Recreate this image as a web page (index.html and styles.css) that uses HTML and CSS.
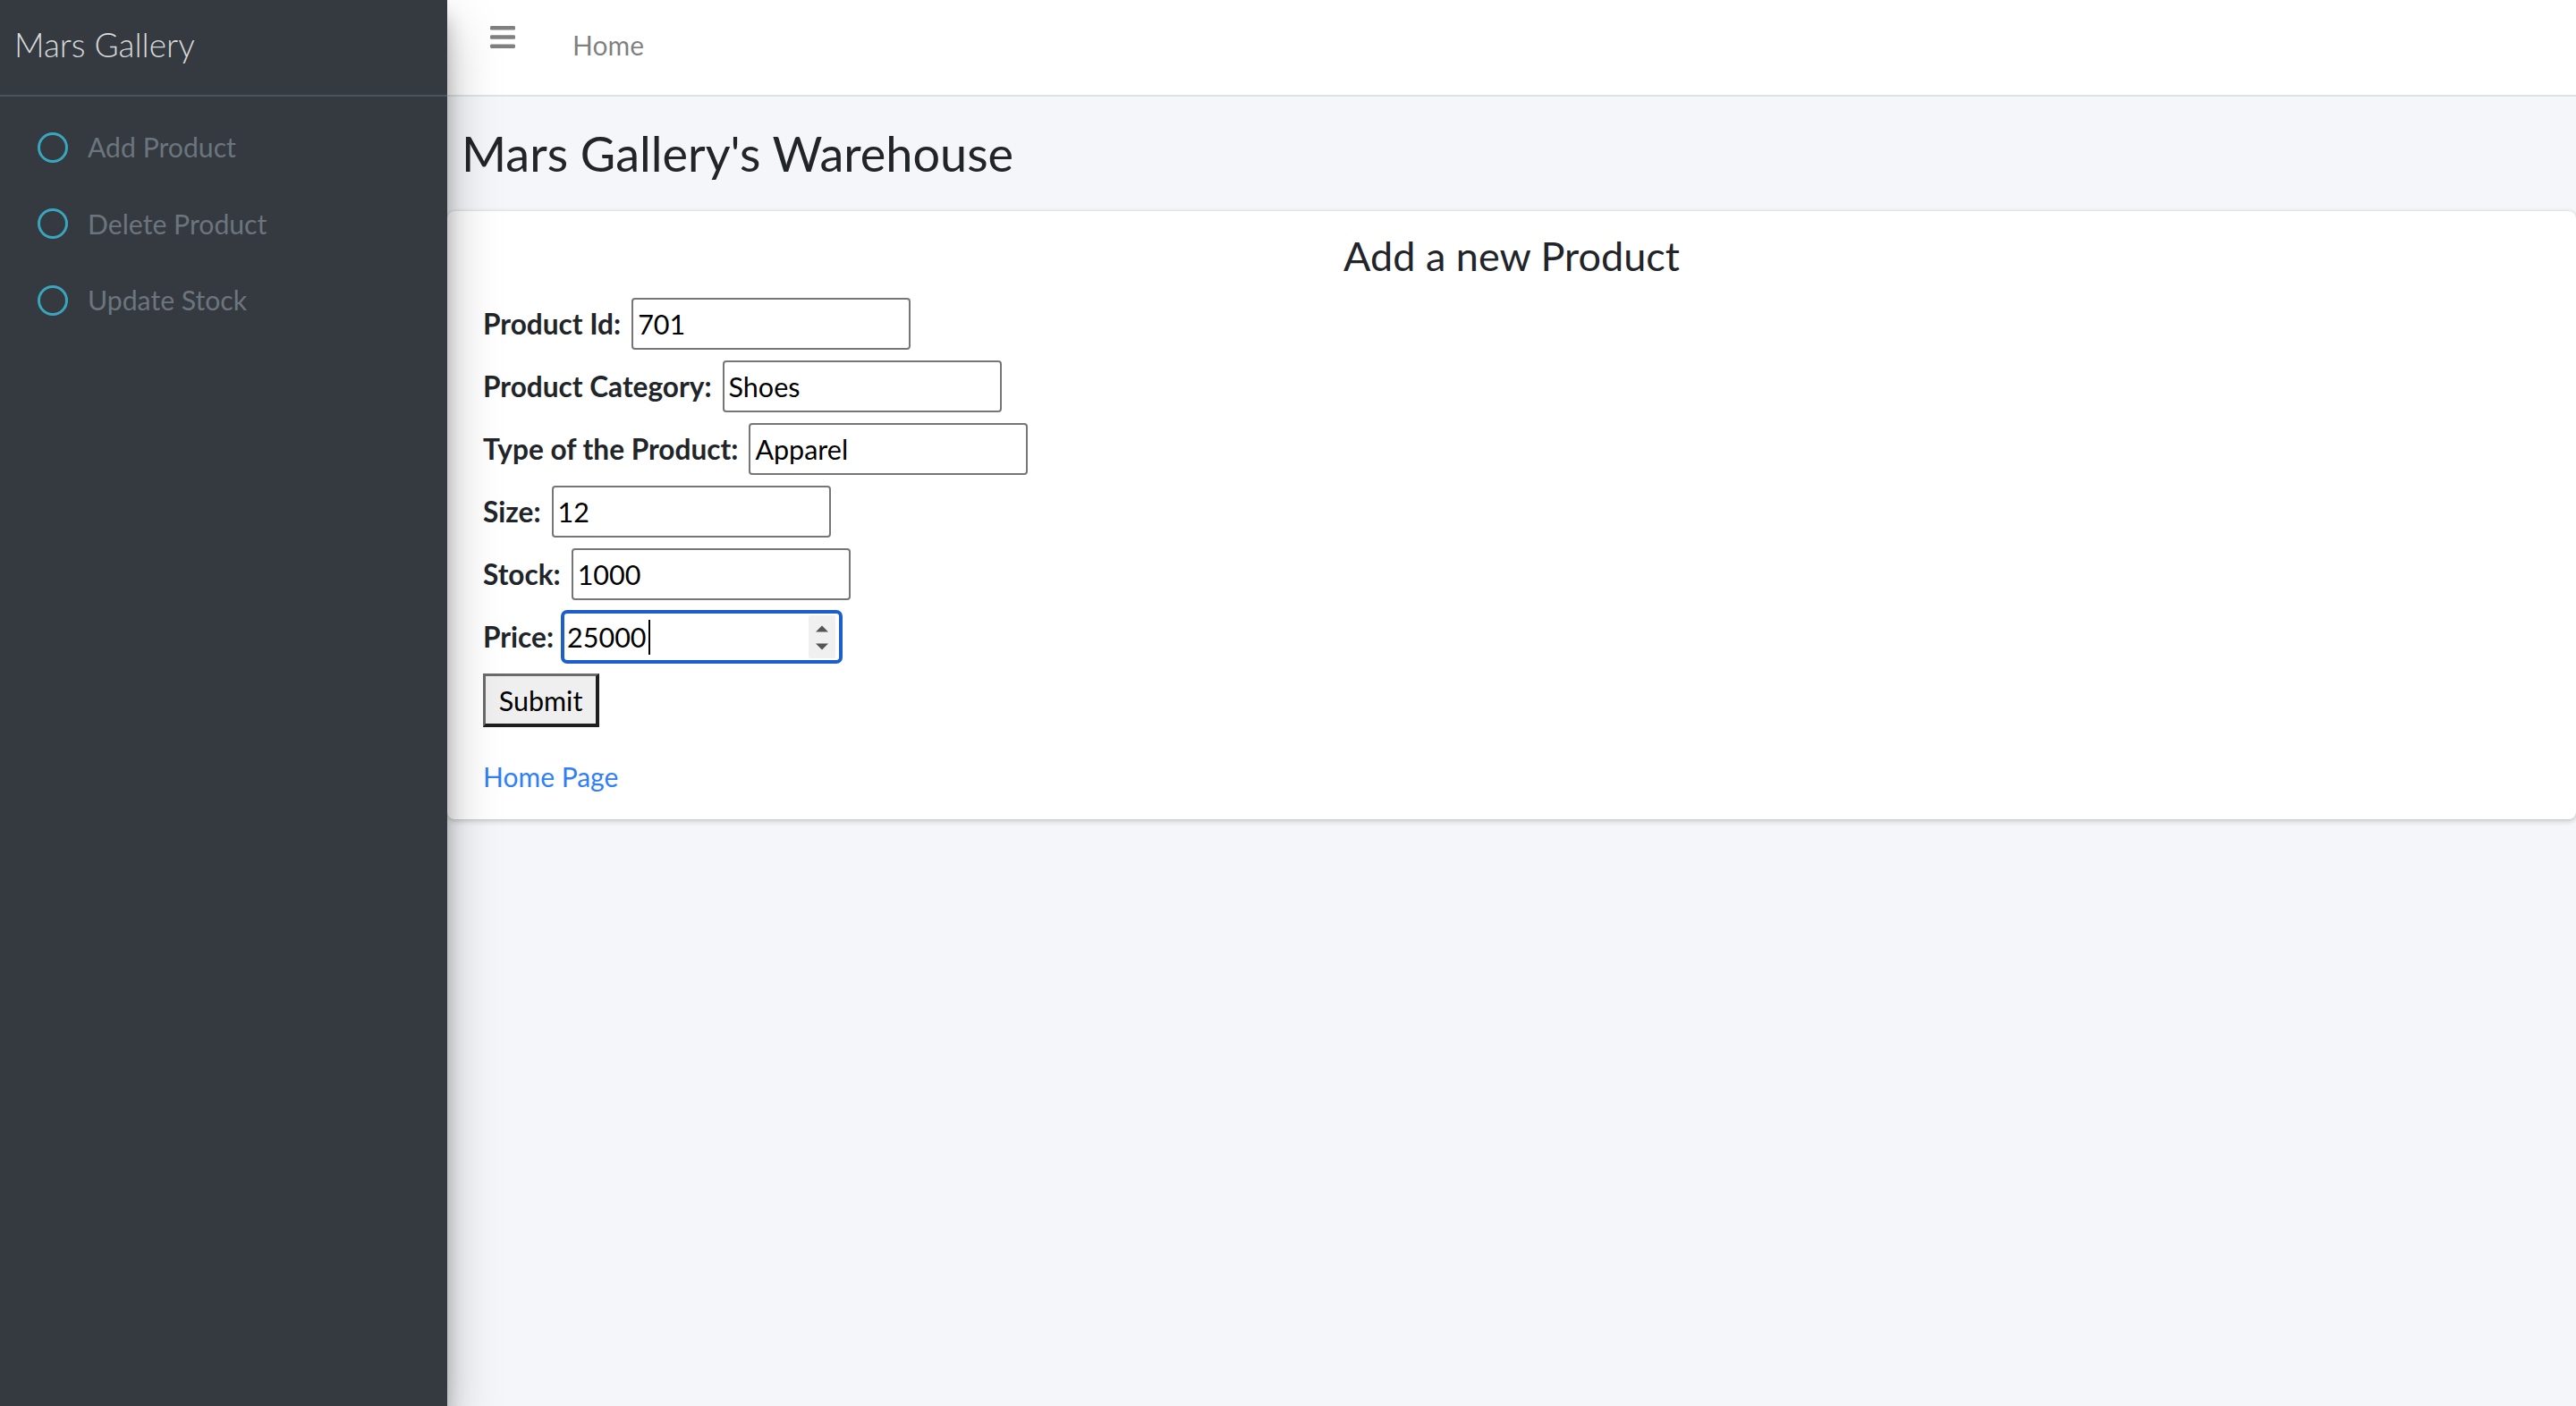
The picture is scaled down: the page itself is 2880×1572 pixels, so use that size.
FILE: index.html
```html
<!DOCTYPE html>
<html lang="en">
<head>
<meta charset="utf-8">
<title>Mars Gallery</title>
<link rel="stylesheet" href="styles.css">
</head>
<body>
<div class="wrapper">
  <aside class="sidebar">
    <div class="brand"><span class="brand-text">Mars Gallery</span></div>
    <nav class="nav">
      <a class="nav-link" href="#"><span class="ring"></span><span>Add Product</span></a>
      <a class="nav-link" href="#"><span class="ring"></span><span>Delete Product</span></a>
      <a class="nav-link" href="#"><span class="ring"></span><span>Update Stock</span></a>
    </nav>
  </aside>
  <div class="main">
    <header class="topbar">
      <a class="burger" href="#" aria-label="Menu">
        <svg width="28" height="25" viewBox="0 0 28 25"><rect x="0" y="0" width="28" height="4.6" rx="1.4" fill="#808080"/><rect x="0" y="10.2" width="28" height="4.6" rx="1.4" fill="#808080"/><rect x="0" y="20.4" width="28" height="4.6" rx="1.4" fill="#808080"/></svg>
      </a>
      <a class="top-link" href="#">Home</a>
    </header>
    <section class="content-header">
      <h1>Mars Gallery's Warehouse</h1>
    </section>
    <section class="card">
      <h4 class="card-title">Add a new Product</h4>
      <form class="product-form">
        <div class="row"><label for="pid">Product Id:</label><input id="pid" type="text" value="701"></div>
        <div class="row"><label for="pcat">Product Category:</label><input id="pcat" type="text" value="Shoes"></div>
        <div class="row"><label for="ptype">Type of the Product:</label><input id="ptype" type="text" value="Apparel"></div>
        <div class="row"><label for="psize">Size:</label><input id="psize" type="text" value="12"></div>
        <div class="row"><label for="pstock">Stock:</label><input id="pstock" type="text" value="1000"></div>
        <div class="row price-row"><label>Price:</label><span class="field focus">25000<span class="caret"></span><span class="spin"><svg width="30" height="48" viewBox="0 0 30 48"><polygon points="8,18.5 22,18.5 15,11.5" fill="#555"/><polygon points="8,31.5 22,31.5 15,38.5" fill="#555"/></svg></span></span></div>
        <div class="row"><button type="button" class="btn">Submit</button></div>
      </form>
      <p class="home"><a href="#">Home Page</a></p>
    </section>
  </div>
</div>
</body>
</html>
```
FILE: styles.css
```css
* { box-sizing: border-box; }
html, body { margin: 0; }
body {
  font-family: Lato, "Noto Sans", "Liberation Sans", sans-serif;
  color: #212529;
  background: #f4f6f9;
}
.wrapper { display: flex; min-height: 1572px; }

.sidebar {
  width: 500px;
  flex: none;
  background: #343a40;
  position: relative;
  z-index: 2;
  box-shadow: 0 28px 56px rgba(0,0,0,.25), 0 20px 20px rgba(0,0,0,.22);
}
.brand {
  height: 108px;
  border-bottom: 2px solid #4b545c;
  padding: 28px 0 0 16px;
}
.brand-text {
  display: block;
  font-size: 37px;
  font-weight: 300;
  line-height: 44px;
  color: rgba(255,255,255,.82);
}
.nav { display: flex; flex-direction: column; padding-top: 14px; }
.nav-link {
  height: 85.5px;
  display: flex;
  align-items: center;
  gap: 22px;
  padding-left: 42px;
  color: #6c757d;
  text-decoration: none;
  font-size: 30.2px;
  line-height: 37px;
}
.ring {
  flex: none;
  width: 34px;
  height: 34px;
  border: 3.5px solid #3aa6bd;
  border-radius: 50%;
}

.main { flex: 1; min-width: 0; display: flex; flex-direction: column; }
.topbar {
  height: 108px;
  background: #fff;
  border-bottom: 2px solid #dee2e6;
  display: flex;
  align-items: flex-start;
}
.burger { display: block; width: 28px; height: 25px; margin: 29px 0 0 48px; }
.burger svg { display: block; }
.top-link {
  margin: 32px 0 0 64px;
  font-size: 30px;
  line-height: 36px;
  color: rgba(0,0,0,.5);
  text-decoration: none;
}

.content-header { padding: 31px 16px 32px; }
.content-header h1 {
  margin: 0;
  font-size: 54px;
  font-weight: 400;
  line-height: 65px;
  color: #212529;
}

.card {
  background: #fff;
  border-radius: 8px;
  box-shadow: 0 0 2px rgba(0,0,0,.125), 0 2px 6px rgba(0,0,0,.2);
  padding: 23px 40px 30px;
}
.card-title {
  margin: 0 0 20px;
  text-align: center;
  font-size: 45px;
  font-weight: 400;
  line-height: 54px;
  color: #212529;
}
.product-form { display: flex; flex-direction: column; align-items: flex-start; gap: 12px; }
.row { display: flex; align-items: baseline; gap: 12px; }
.row label { font-size: 31.6px; font-weight: 700; line-height: 36px; color: #212529; }
.row input {
  width: 312px;
  height: 58px;
  border: 2px solid #767676;
  border-radius: 4px;
  padding: 0 5px;
  font-family: inherit;
  font-size: 30.5px;
  color: #000;
  background: #fff;
  outline: none;
}
.price-row { gap: 9px; }
.field {
  display: inline-flex;
  align-items: center;
  width: 313px;
  height: 58px;
  border: 3px solid #1c5fcb;
  box-shadow: 0 0 0 1px #1c5fcb;
  border-radius: 6px;
  padding: 0 4px 0 3px;
  font-size: 30.5px;
  color: #000;
  background: #fff;
}
.caret { width: 2px; height: 39px; background: #000; margin-left: 2px; }
.spin {
  margin-left: auto;
  width: 30px;
  height: 48px;
  background: #f0f0f0;
  border-radius: 2px;
}
.spin svg { display: block; }
.btn {
  width: 130px;
  height: 60px;
  padding: 0;
  border-style: solid;
  border-width: 3px 4px 4px 3px;
  border-color: #6b6b6b #1f1f1f #1f1f1f #6b6b6b;
  background: #efefef;
  font-family: inherit;
  font-size: 30.5px;
  color: #000;
}
.home { margin: 37px 0 0; font-size: 30px; line-height: 36px; }
.home a { color: #2f80f6; text-decoration: none; }
```
